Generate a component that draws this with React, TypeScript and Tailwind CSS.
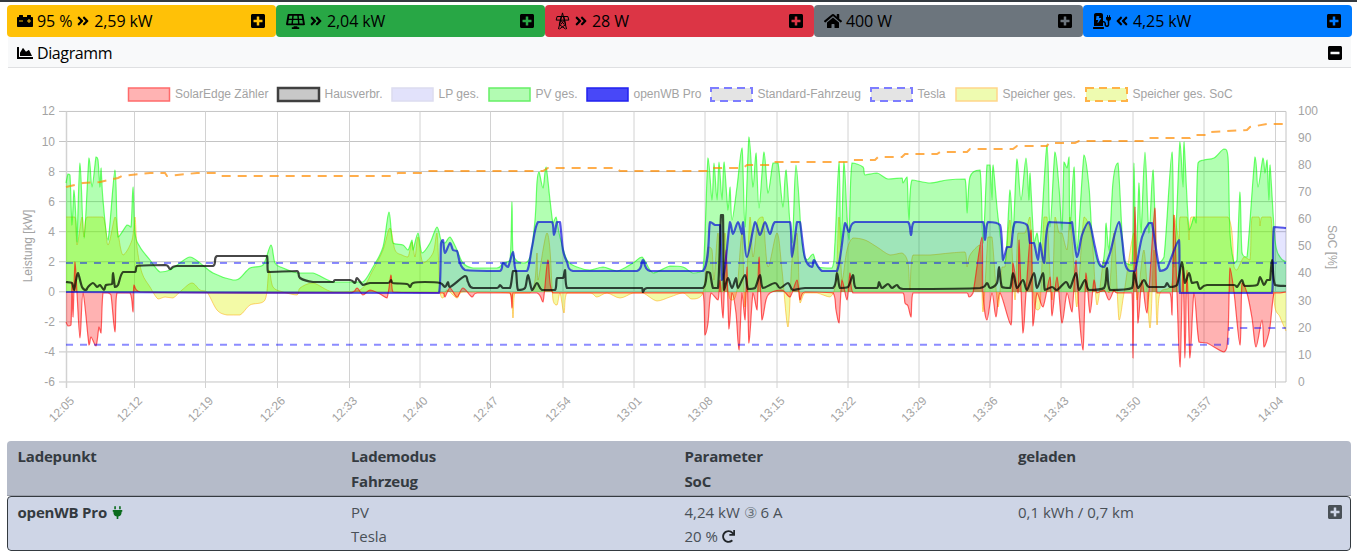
import { FaCarBattery, FaAngleDoubleRight, FaAngleDoubleLeft, FaSolarPanel, FaHome, FaChargingStation, FaPlusSquare, FaMinusSquare, FaChartArea, FaPlug, FaRedo } from 'react-icons/fa';
import type { ReactNode } from 'react';

const ui = { fontFamily: '"Open Sans", sans-serif' };

// series are page pixel points, the chart svg has its viewBox at page coordinates
const pv =
  '66,183 68,174 70,175 72,225 74,190 76,220 77,242 80,163 84,238 89,158 92,187 96,157 98,160 100,187 101,168 103,200 108,240 115,170 118,237 127,225 131,227 133,187 135,233 140,247 150,260 160,272 170,270 180,263 190,257 200,263 213,273 233,280 240,278 250,268 263,265 271,245 275,263 283,268 297,273 313,273 333,282 350,282 363,282 373,267 383,247 389,212 393,243 403,245 408,250 412,240 413,250 418,233 422,253 430,243 437,227 441,240 445,243 450,237 457,250 463,263 473,268 497,268 503,263 510,260 512,202 513,253 523,263 530,257 535,220 537,182 539,172 543,188 546,167 550,200 553,223 556,217 560,237 567,260 577,267 590,270 603,267 617,271 633,263 642,257 653,273 670,266 683,267 693,273 703,270 708,158 712,200 714,163 717,200 719,162 722,200 724,162 728,210 730,187 732,220 737,187 742,148 745,227 749,137 753,187 756,153 759,208 764,152 768,193 773,163 778,163 783,207 786,170 792,243 796,165 802,243 807,260 813,254 818,267 832,268 835,242 839,162 841,247 844,162 847,217 849,240 852,163 863,167 865,175 877,173 888,179 902,178 903,183 907,177 909,220 912,180 930,183 947,180 965,179 967,213 970,177 980,170 983,243 987,165 990,165 992,200 993,165 998,217 1005,263 1010,190 1013,233 1017,159 1021,200 1026,158 1029,200 1030,173 1034,243 1037,233 1040,247 1047,145 1050,227 1055,152 1059,187 1062,230 1064,162 1067,168 1069,157 1070,230 1074,167 1077,250 1084,155 1089,187 1092,233 1097,260 1102,267 1105,247 1106,223 1109,250 1113,182 1118,163 1124,260 1132,265 1134,163 1136,263 1139,183 1141,233 1145,152 1149,233 1153,170 1157,263 1164,257 1172,152 1174,267 1177,207 1180,142 1183,187 1184,142 1189,230 1194,217 1196,223 1198,163 1204,160 1214,158 1224,149 1228,157 1230,233 1234,263 1237,260 1240,192 1242,253 1247,257 1255,157 1258,187 1263,158 1265,173 1267,160 1269,200 1270,165 1275,240 1280,257 1286,262';

const speicher =
  '66,217 75,217 77,245 82,217 84,237 87,217 103,217 108,245 115,217 118,233 123,255 132,240 135,217 137,247 142,273 150,287 158,299 165,297 173,298 182,290 192,283 200,290 207,292 217,310 227,315 240,315 250,305 265,300 269,270 273,287 283,292 297,295 300,288 313,283 333,292 360,290 373,270 383,250 390,228 395,250 402,255 408,257 412,242 415,257 418,237 423,263 433,253 437,233 440,292 443,298 447,290 457,298 463,292 510,293 513,318 515,293 530,293 535,280 537,253 538,280 543,250 547,233 550,250 553,300 557,305 560,293 564,313 567,293 590,293 597,297 607,293 620,298 633,293 643,293 657,301 670,297 683,293 692,299 703,293 708,247 712,250 714,280 718,233 722,292 725,233 728,290 732,300 737,290 742,233 745,307 750,217 753,257 758,220 763,217 768,267 777,233 782,270 788,327 792,260 797,233 800,303 805,293 817,293 830,297 836,280 839,217 842,280 847,250 853,238 865,240 877,247 890,255 902,253 908,263 910,290 913,255 930,255 950,253 965,252 967,267 970,255 980,245 983,312 988,237 992,237 998,307 1002,267 1005,267 1010,220 1015,300 1018,233 1025,233 1030,217 1034,300 1037,310 1040,308 1044,217 1047,217 1052,300 1055,217 1059,233 1062,233 1067,250 1070,217 1074,267 1077,307 1084,217 1092,240 1097,305 1104,260 1109,293 1114,233 1119,320 1124,293 1134,233 1137,300 1144,250 1150,328 1154,250 1157,325 1160,293 1172,283 1174,215 1179,240 1180,217 1187,217 1189,240 1191,217 1228,217 1234,267 1237,270 1244,257 1250,260 1252,217 1259,217 1260,226 1262,217 1271,217 1274,300 1280,317 1286,331';

const zaehler =
  '66,322 68,326 71,325 72,282 73,317 75,262 77,293 80,338 83,293 89,345 91,337 96,346 99,327 101,333 103,293 108,293 111,295 115,332 117,293 130,293 133,312 134,285 140,292 350,293 357,288 363,295 370,290 380,294 387,298 391,275 393,292 443,293 445,297 450,288 457,297 463,288 472,297 477,293 510,293 512,308 513,293 537,293 543,302 548,260 553,293 703,293 705,335 708,323 711,293 718,300 720,280 723,318 726,250 729,329 732,293 736,313 739,350 742,293 745,320 747,267 749,343 753,293 757,310 759,257 762,320 766,300 770,293 782,290 790,297 797,280 800,300 805,292 833,293 836,310 839,323 842,280 847,300 850,273 853,293 903,293 905,303 908,306 911,317 913,293 967,293 969,297 973,293 982,237 983,293 987,320 992,293 996,317 1000,293 1011,325 1013,263 1018,293 1019,240 1023,333 1026,293 1031,230 1033,326 1037,293 1043,307 1050,277 1052,316 1057,277 1062,323 1067,293 1072,312 1076,260 1079,312 1083,350 1086,273 1090,313 1094,280 1097,293 1104,290 1109,300 1114,290 1117,293 1132,293 1133,358 1135,207 1138,323 1142,280 1147,313 1155,208 1157,293 1170,293 1172,315 1174,215 1177,293 1180,367 1183,267 1185,358 1187,270 1190,358 1194,293 1199,342 1207,343 1224,352 1228,333 1230,268 1234,292 1240,345 1242,283 1247,293 1252,318 1256,347 1262,320 1264,347 1267,340 1270,327 1274,293 1280,293 1286,292';

const ladepunkt =
  '66,292 439,293 441,243 443,240 445,253 450,243 453,250 457,251 465,270 500,271 503,263 508,267 513,252 516,271 527,271 532,247 538,222 552,222 554,235 557,222 560,222 563,250 567,262 573,271 637,271 643,260 650,271 703,271 710,222 715,225 720,225 722,280 725,267 730,222 733,234 738,222 742,234 743,222 747,257 755,222 760,235 765,222 770,234 775,222 790,222 792,257 797,222 800,222 805,258 812,267 814,260 822,271 837,271 845,223 849,232 855,222 908,222 911,235 914,222 983,222 985,240 988,222 1000,225 1003,260 1007,247 1011,247 1015,222 1027,225 1030,243 1034,243 1038,260 1040,243 1044,263 1049,222 1070,223 1072,222 1077,257 1082,235 1089,222 1095,247 1099,263 1104,267 1110,253 1119,222 1125,263 1130,271 1135,271 1142,237 1149,223 1152,223 1160,271 1167,268 1179,240 1180,293 1272,293 1274,227 1286,228';

const haus =
  '66,282 72,283 74,290 76,280 78,273 82,287 86,290 88,287 93,283 97,287 100,285 104,290 106,285 112,284 113,273 115,287 118,285 123,272 135,272 137,266 165,265 170,269 177,266 213,266 217,256 267,256 268,272 297,271 300,278 313,282 333,282 335,280 350,280 355,283 357,278 363,285 370,283 388,283 391,280 393,283 407,284 410,287 413,283 425,282 440,283 445,287 448,282 450,287 465,276 468,282 473,288 497,288 500,285 503,288 510,288 513,271 516,271 518,290 525,288 528,275 532,290 537,283 542,290 555,290 557,278 563,278 565,270 567,288 642,288 643,292 647,288 703,288 707,272 710,273 713,288 718,288 721,215 723,215 724,290 728,278 732,288 736,278 738,288 745,275 748,289 755,288 760,275 763,288 775,283 780,288 788,283 793,290 805,288 833,288 837,273 840,288 848,287 853,275 856,288 877,288 879,282 882,288 888,284 892,288 897,285 903,289 980,288 987,283 990,288 997,283 999,267 1002,287 1010,288 1013,273 1017,288 1023,280 1027,290 1034,273 1037,288 1043,273 1045,290 1052,287 1057,290 1066,282 1070,288 1076,273 1079,290 1085,280 1089,290 1104,288 1107,268 1110,290 1132,288 1134,272 1138,288 1144,280 1149,287 1164,287 1167,283 1170,287 1177,285 1182,262 1185,283 1189,273 1192,283 1197,282 1200,289 1207,285 1234,285 1237,287 1242,280 1245,286 1257,285 1260,277 1264,285 1267,280 1270,280 1272,260 1275,285 1286,286';

const soc =
  '66,187 83,183 100,182 118,178 122,176 150,173 165,173 167,176 197,173 217,173 221,176 393,176 398,173 422,173 427,171 543,171 548,168 617,168 620,171 710,171 713,168 743,168 747,165 770,165 772,162 850,162 853,160 875,160 878,157 902,157 905,154 937,154 940,152 967,152 970,149 1013,149 1017,146 1047,146 1049,143 1075,143 1079,141 1145,141 1149,138 1190,138 1194,135 1207,135 1210,132 1247,130 1250,127 1267,124 1286,124';

const clamp = (v: number, a: number, b: number) => Math.min(Math.max(v, Math.min(a, b)), Math.max(a, b));

// curve through the points, control points kept inside each segment so nothing overshoots
function smooth(points: string) {
  const p = points.split(' ').map((s) => s.split(',').map(Number));
  const k = 0.16;
  let d = `M${p[0][0]},${p[0][1]}`;
  for (let i = 0; i < p.length - 1; i++) {
    const a = p[Math.max(i - 1, 0)];
    const b = p[i];
    const c = p[i + 1];
    const e = p[Math.min(i + 2, p.length - 1)];
    const x1 = clamp(b[0] + (c[0] - a[0]) * k, b[0], c[0]);
    const y1 = clamp(b[1] + (c[1] - a[1]) * k, b[1], c[1]);
    const x2 = clamp(c[0] - (e[0] - b[0]) * k, b[0], c[0]);
    const y2 = clamp(c[1] - (e[1] - b[1]) * k, b[1], c[1]);
    d += ` C${x1},${y1} ${x2},${y2} ${c[0]},${c[1]}`;
  }
  return d;
}

const area = (points: string) => `${smooth(points)} L1286,292 L66,292 Z`;

const yTicks = [12, 10, 8, 6, 4, 2, 0, -2, -4, -6];
const socTicks = [100, 90, 80, 70, 60, 50, 40, 30, 20, 10, 0];
const xTicks: [string, number][] = [
  ['12:05', 66.5], ['12:12', 134.5], ['12:19', 205.5], ['12:26', 277.5], ['12:33', 349.5],
  ['12:40', 420], ['12:47', 490.5], ['12:54', 563], ['13:01', 634], ['13:08', 705],
  ['13:15', 777], ['13:22', 848], ['13:29', 919], ['13:36', 990], ['13:43', 1061],
  ['13:50', 1133], ['13:57', 1204], ['14:04', 1275.5],
];

const legend = [
  { label: 'SolarEdge Zähler', x: 128.5, fill: '#ffb3b3', stroke: '#ff6b6b', w: 1.5 },
  { label: 'Hausverbr.', x: 278, fill: '#c8c8c8', stroke: '#404040', w: 2.5 },
  { label: 'LP ges.', x: 392, fill: '#e2e2fb', stroke: '#dcdcf0', w: 1.5 },
  { label: 'PV ges.', x: 489, fill: '#b2fbb2', stroke: '#66f066', w: 1.5 },
  { label: 'openWB Pro', x: 587, fill: '#4848f8', stroke: '#2020f0', w: 1.5 },
  { label: 'Standard-Fahrzeug', x: 711, fill: '#e4e4e4', stroke: '#7d7dff', w: 2, dash: '8 5' },
  { label: 'Tesla', x: 871, fill: '#e4e4e4', stroke: '#7d7dff', w: 2, dash: '8 5' },
  { label: 'Speicher ges.', x: 956, fill: '#eefbb0', stroke: '#ffd68a', w: 1.5 },
  { label: 'Speicher ges. SoC', x: 1086, fill: '#eefbb0', stroke: '#ffb347', w: 2, dash: '8 5' },
];

function Chart() {
  return (
    <svg className="block w-[1343px] h-[370px]" viewBox="8 68 1343 370" fontFamily='"Liberation Sans", sans-serif' fontSize="12" fill="#a3a3a3">
      {legend.map((l) => (
        <g key={l.label}>
          <rect x={l.x} y={88} width={41} height={13} fill={l.fill} stroke={l.stroke} strokeWidth={l.w} strokeDasharray={l.dash} />
          <text x={l.x + 46.5} y={98}>{l.label}</text>
        </g>
      ))}

      {/* grid */}
      {yTicks.map((t) => {
        const y = 291.8 - t * 15.03;
        return (
          <g key={t}>
            <line x1={59} x2={1286} y1={y} y2={y} stroke="#c4c4c4" />
            <text x={55} y={y + 4} textAnchor="end">{t}</text>
          </g>
        );
      })}
      {xTicks.map(([label, x]) => (
        <g key={label}>
          <line x1={x} x2={x} y1={111.5} y2={388} stroke="#d2d2d2" strokeWidth={x === 66.5 ? 1.5 : 1} />
          <text textAnchor="end" transform={`translate(${x + 5},398) rotate(-45)`} dy="5">{label}</text>
        </g>
      ))}
      <line x1={1286} x2={1286} y1={111.5} y2={382} stroke="#c4c4c4" />
      {socTicks.map((t) => (
        <text key={t} x={1298} y={114.5 + (100 - t) * 2.715}>{t}</text>
      ))}
      <text textAnchor="middle" transform="translate(32,246) rotate(-90)">Leistung [kW]</text>
      <text textAnchor="middle" transform="translate(1328,247) rotate(90)">SoC [%]</text>

      {/* series, back to front */}
      <path d={area(speicher)} fill="rgba(220,240,0,0.35)" />
      <path d={smooth(speicher)} fill="none" stroke="rgba(255,165,0,0.5)" strokeWidth={1} />
      <path d={area(pv)} fill="rgba(0,255,0,0.3)" />
      <path d={smooth(pv)} fill="none" stroke="rgba(0,255,0,0.55)" strokeWidth={1.2} />
      <path d={area(ladepunkt)} fill="rgba(0,0,255,0.1)" />
      <path d={area(zaehler)} fill="rgba(255,0,0,0.3)" />
      <path d={smooth(zaehler)} fill="none" stroke="rgba(255,0,0,0.6)" strokeWidth={1.2} />
      <line x1={66} x2={1286} y1={263} y2={263} stroke="rgba(0,0,255,0.45)" strokeWidth={2} strokeDasharray="7 7" />
      <polyline points="66,344.7 1228,344.7 1229,328 1286,328" fill="none" stroke="rgba(0,0,255,0.45)" strokeWidth={2} strokeDasharray="7 7" />
      <polyline points={soc} fill="none" stroke="rgba(255,140,0,0.7)" strokeWidth={2} strokeDasharray="9 7" />
      <path d={smooth(ladepunkt)} fill="none" stroke="rgba(0,0,220,0.65)" strokeWidth={2.2} strokeLinejoin="round" />
      <path d={smooth(haus)} fill="none" stroke="rgba(0,0,0,0.72)" strokeWidth={2.2} strokeLinejoin="round" />
    </svg>
  );
}

function Pylon() {
  return (
    <svg viewBox="0 0 16 20" className="w-[15px] h-[18px]" fill="none" stroke="#000" strokeWidth="1.1">
      <path d="M8 1 3.5 19M8 1l4.5 18M2 5h12M1 9h14M2 5 1 9M14 5l1 4M6.5 5l-2 9 7 5M9.5 5l2 9-7 5M6 9l4 5M10 9l-4 5" />
    </svg>
  );
}

function PowerButton({ color, children }: { color: string; children: ReactNode }) {
  return (
    <div className={`flex h-8 items-center justify-between rounded-[4px] pl-[10px] pr-[10px] text-black ${color}`}>
      <span className="flex items-center gap-1 text-base tracking-[-0.1px] whitespace-nowrap">{children}</span>
      <FaPlusSquare className="text-[16px] text-black" />
    </div>
  );
}

export default function App() {
  return (
    <div className="min-h-[556px] border-t-2 border-[#343a40] bg-white" style={ui}>
      <div className="grid grid-cols-5 pl-[7px] pr-[5px] pt-[3px]">
        <PowerButton color="bg-[#ffc107]">
          <FaCarBattery className="text-[16px]" />
          <span>95 %</span>
          <FaAngleDoubleRight className="text-[14px]" />
          <span>2,59 kW</span>
        </PowerButton>
        <PowerButton color="bg-[#28a745]">
          <FaSolarPanel className="text-[19px]" />
          <FaAngleDoubleRight className="text-[14px]" />
          <span>2,04 kW</span>
        </PowerButton>
        <PowerButton color="bg-[#dc3545]">
          <Pylon />
          <FaAngleDoubleRight className="text-[14px]" />
          <span>28 W</span>
        </PowerButton>
        <PowerButton color="bg-[#6c757d]">
          <FaHome className="text-[18px]" />
          <span>400 W</span>
        </PowerButton>
        <PowerButton color="bg-[#007bff]">
          <FaChargingStation className="text-[18px]" />
          <FaAngleDoubleLeft className="text-[14px]" />
          <span>4,25 kW</span>
        </PowerButton>
      </div>

      <div className="ml-[8px] mr-[6px]">
        <div className="flex h-[31px] items-center justify-between border-b border-[#dfe0e2] bg-[#f8f9fa] pl-[9px] pr-[8px] pt-[2px]">
          <span className="flex items-center gap-1 text-base tracking-[-0.4px] text-black">
            <FaChartArea className="text-[16px]" />
            Diagramm
          </span>
          <FaMinusSquare className="text-[16px] text-black" />
        </div>
        <Chart />
      </div>

      <div className="ml-[7px] mr-[6px] mt-[3px] overflow-hidden rounded-[4px] text-[15px] text-[#495057]">
        <div className="grid h-[55px] grid-cols-[repeat(4,333.5px)] border-b border-[#9a9fab] bg-[#b5bbc9] pl-[10.5px] pt-[3px] font-bold leading-[24.5px] tracking-[-0.2px] text-[#343a40]">
          <div>Ladepunkt</div>
          <div>Lademodus<br />Fahrzeug</div>
          <div>Parameter<br />SoC</div>
          <div>geladen</div>
        </div>
        <div className="relative grid h-[55px] grid-cols-[repeat(4,333.5px)] rounded-[4px] border border-[#343a40] bg-[#ced5e6] pl-[9.5px] pt-[3px] leading-[24px]">
          <div className="flex items-start gap-1 font-bold tracking-[-0.2px] text-[#343a40]">
            openWB Pro
            <FaPlug className="mt-[6px] text-[13px] text-[#0b6b1d]" />
          </div>
          <div>PV<br />Tesla</div>
          <div>
            <div className="whitespace-nowrap">4,24 kW <span className="text-[#6c757d]">③</span> 6 A</div>
            <div className="flex items-center gap-1">20 % <FaRedo className="text-[13px] text-[#212529]" /></div>
          </div>
          <div>0,1 kWh / 0,7 km</div>
          <FaPlusSquare className="absolute right-[7px] top-[7px] text-[16px] text-[#495057]" />
        </div>
      </div>
    </div>
  );
}
